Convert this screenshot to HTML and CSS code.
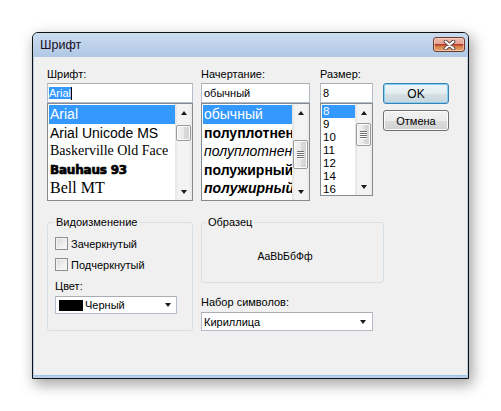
FILE: index.html
```html
<!DOCTYPE html>
<html lang="ru">
<head>
<meta charset="utf-8">
<title>Шрифт</title>
<link rel="stylesheet" href="styles.css">
</head>
<body>
<div class="stage">
  <div class="window">
    <div class="titlebar">
      <span class="title">Шрифт</span>
      <button class="close" aria-label="Закрыть">
        <svg width="13" height="10" viewBox="0 0 13 10">
          <path d="M2.5 1.5 L10.5 8.5 M10.5 1.5 L2.5 8.5" stroke="#5a4444" stroke-width="3.8" stroke-linecap="round" fill="none"/>
          <path d="M2.5 1.5 L10.5 8.5 M10.5 1.5 L2.5 8.5" stroke="#ffffff" stroke-width="2.1" stroke-linecap="round" fill="none"/>
        </svg>
      </button>
    </div>
    <div class="client">
      <div class="top-row">
        <div class="col col-font">
          <div class="lbl">Шрифт:</div>
          <div class="edit"><span class="sel">Arial</span><span class="caret"></span></div>
          <div class="list list-font">
            <div class="items">
              <div class="item hl f-arial">Arial</div>
              <div class="item f-arial">Arial Unicode MS</div>
              <div class="item f-bask">Baskerville Old Face</div>
              <div class="item f-bauhaus">Bauhaus 93</div>
              <div class="item f-bell">Bell MT</div>
            </div>
            <div class="vscroll">
              <div class="sbtn"><span class="arr-up"></span></div>
              <div class="track"><div class="thumb thumb-font"></div></div>
              <div class="sbtn"><span class="arr-down"></span></div>
            </div>
          </div>
        </div>
        <div class="col col-style">
          <div class="lbl">Начертание:</div>
          <div class="edit">обычный</div>
          <div class="list list-style">
            <div class="items">
              <div class="item hl">обычный</div>
              <div class="item s-narrow-b">полуплотненный</div>
              <div class="item s-narrow-i">полуплотненный курсив</div>
              <div class="item s-bold">полужирный</div>
              <div class="item s-bold-i">полужирный курсив</div>
            </div>
            <div class="vscroll">
              <div class="sbtn"><span class="arr-up"></span></div>
              <div class="track"><div class="thumb thumb-style"><span class="grip"></span></div></div>
              <div class="sbtn"><span class="arr-down"></span></div>
            </div>
          </div>
        </div>
        <div class="col col-size">
          <div class="lbl">Размер:</div>
          <div class="edit">8</div>
          <div class="list list-size">
            <div class="items">
              <div class="item hl">8</div>
              <div class="item">9</div>
              <div class="item">10</div>
              <div class="item">11</div>
              <div class="item">12</div>
              <div class="item">14</div>
              <div class="item">16</div>
            </div>
            <div class="vscroll">
              <div class="sbtn"><span class="arr-up"></span></div>
              <div class="track"><div class="thumb thumb-size"><span class="grip"></span></div></div>
              <div class="sbtn"><span class="arr-down"></span></div>
            </div>
          </div>
        </div>
        <div class="buttons">
          <button class="btn btn-default">OK</button>
          <button class="btn">Отмена</button>
        </div>
      </div>
      <div class="bottom-row">
        <fieldset class="group g-effects">
          <legend>Видоизменение</legend>
          <div class="check"><span class="box"></span><span>Зачеркнутый</span></div>
          <div class="check check-2"><span class="box"></span><span>Подчеркнутый</span></div>
          <div class="lbl lbl-color">Цвет:</div>
          <div class="combo combo-color"><span class="swatch"></span><span class="combo-text">Черный</span><span class="arr-down"></span></div>
        </fieldset>
        <div class="right-col">
          <fieldset class="group g-sample">
            <legend>Образец</legend>
            <div class="sample">AaBbБбФф</div>
          </fieldset>
          <div class="lbl lbl-charset">Набор символов:</div>
          <div class="combo combo-charset"><span class="combo-text">Кириллица</span><span class="arr-down"></span></div>
        </div>
      </div>
    </div>
  </div>
</div>
</body>
</html>
```

FILE: styles.css
```css
* { box-sizing: border-box; }
html, body { margin: 0; padding: 0; }
body {
  width: 501px;
  height: 411px;
  overflow: hidden;
  background: #ffffff;
  font-family: "Liberation Sans", Arial, sans-serif;
  font-size: 11px;
  color: #000;
}
.stage { padding: 32px 0 0 32px; }

.window {
  width: 437px;
  height: 347px;
  border: 1px solid #101010;
  border-radius: 6px 6px 0 0;
  background: #b7cfea;
  display: flex;
  flex-direction: column;
  box-shadow: 3px 5px 14px 1px rgba(0, 0, 0, 0.35);
}
.titlebar {
  height: 24px;
  flex: none;
  display: flex;
  align-items: center;
  justify-content: space-between;
  padding: 0 3px 0 7px;
  border-radius: 5px 5px 0 0;
  background: linear-gradient(#cbdcf0, #b0c8e5);
}
.title {
  font-family: "Liberation Sans", Arial, sans-serif;
  font-size: 12.5px;
  color: #1a0f24;
}
.close {
  width: 32px;
  height: 15px;
  margin-top: -1px;
  padding: 0;
  border: 1px solid #6e3b31;
  border-radius: 3px;
  display: flex;
  align-items: center;
  justify-content: center;
  background: linear-gradient(#efbcae 0%, #e3a392 44%, #b8382d 47%, #bf4434 56%, #d4803f 62%, #e6a674 100%);
  box-shadow: inset 0 0 0 1px rgba(255, 225, 215, 0.55);
}
.close svg { display: block; }

.client {
  flex: 1;
  margin: 0 1px 2px 1px;
  background: #f0f0f0;
  padding: 11px 0 0 13px;
  border-bottom: 1px solid #9fc6e4;
}

.top-row { display: flex; align-items: flex-start; }
.col { display: flex; flex-direction: column; }
.col-font { width: 146px; margin-right: 8px; }
.col-style { width: 109px; margin-right: 10px; }
.col-size { width: 53px; margin-right: 10px; }

.lbl { height: 13px; line-height: 13px; margin-bottom: 2px; white-space: nowrap; }

.edit {
  height: 20px;
  border: 1px solid #b4bcc7;
  border-top-color: #abadb3;
  background: #fff;
  padding: 0 2px 0 1px;
  line-height: 18px;
  white-space: nowrap;
  overflow: hidden;
  display: flex;
  align-items: center;
}
.col-style .edit, .col-size .edit { padding-left: 2px; }
.sel { background: #3399ff; color: #fff; line-height: 12px; }
.caret { width: 1px; height: 13px; background: #000; }

.list {
  height: 98px;
  border: 1px solid #868a91;
  background: #fff;
  display: flex;
}
.list-size { height: 93px; }
.items { flex: 1; min-width: 0; overflow: hidden; padding: 1px 0 0 1px; }
.item {
  height: 18.5px;
  line-height: 18.5px;
  font-size: 14px;
  white-space: nowrap;
  overflow: hidden;
  padding-left: 1px;
}
.item.hl { background: #3399ff; color: #fff; }
.list-size .item { height: 13px; line-height: 13px; font-size: 11.5px; padding-left: 1px; }

.f-arial { font-family: "Liberation Sans", Arial, sans-serif; }
.f-bask { font-family: "Liberation Serif", "Times New Roman", serif; font-size: 14px; }
.f-bauhaus { font-family: "DejaVu Sans", sans-serif; font-weight: bold; font-size: 12px; -webkit-text-stroke: 0.7px #000; letter-spacing: -0.2px; }
.f-bell { font-family: "Liberation Serif", "Times New Roman", serif; font-size: 16px; }

.s-narrow-b { font-family: "Liberation Sans Narrow", "Liberation Sans", sans-serif; font-stretch: condensed; font-weight: bold; }
.s-narrow-i { font-family: "Liberation Sans Narrow", "Liberation Sans", sans-serif; font-stretch: condensed; font-style: italic; }
.s-bold { font-weight: bold; }
.s-bold-i { font-weight: bold; font-style: italic; }

.vscroll {
  width: 17px;
  flex: none;
  display: flex;
  flex-direction: column;
  background: linear-gradient(to right, #e4e4e4, #f3f3f3 20%, #f3f3f3 80%, #e8e8e8);
}
.sbtn { height: 17px; flex: none; display: flex; align-items: center; justify-content: center; }
.track { flex: 1; }
.arr-up {
  width: 0; height: 0;
  border-left: 3.5px solid transparent;
  border-right: 3.5px solid transparent;
  border-bottom: 4px solid #1a1a1a;
}
.arr-down {
  width: 0; height: 0;
  border-left: 3.5px solid transparent;
  border-right: 3.5px solid transparent;
  border-top: 4px solid #1a1a1a;
}
.thumb {
  margin: 0 1px;
  border: 1px solid #9a9a9a;
  border-radius: 2px;
  background: linear-gradient(to right, #f4f4f4, #e9e9e9 50%, #dadada 51%, #d2d2d2);
  box-shadow: inset 0 0 0 1px #fbfbfb;
  display: flex;
  align-items: center;
  justify-content: center;
}
.thumb-font { margin-top: 4px; height: 16px; }
.thumb-style { margin-top: 19px; height: 29px; }
.thumb-size { margin-top: 2px; height: 23px; }
.grip {
  width: 7px;
  height: 8px;
  background: repeating-linear-gradient(#6f6f6f 0 1px, #fdfdfd 1px 2px);
}

.buttons { width: 66px; padding-top: 15px; display: flex; flex-direction: column; }
.btn {
  width: 66px;
  height: 21px;
  padding: 0;
  border: 1px solid #707070;
  border-radius: 3px;
  background: linear-gradient(#f2f2f2 0%, #ebebeb 50%, #dddddd 51%, #cfcfcf 100%);
  box-shadow: inset 0 0 0 1px #fcfcfc;
  font-family: "Liberation Sans", Arial, sans-serif;
  font-size: 11px;
  color: #000;
}
.btn + .btn { margin-top: 6px; }
.btn-default {
  border-color: #3c7fb1;
  background: linear-gradient(#eef4f7 0%, #e5ecf0 50%, #d5dfe6 51%, #c9d6df 100%);
  box-shadow: inset 0 0 0 1px #7fd0f2;
  font-size: 12px;
}

.bottom-row { display: flex; align-items: flex-start; margin-top: 15px; }
.group {
  margin: 0;
  border: 1px solid #d5dfe5;
  border-radius: 3px;
  min-width: 0;
}
.group legend { padding: 0 2px; margin-left: -1px; line-height: 13px; height: 13px; }
.g-effects { width: 146px; height: 115px; margin-right: 8px; padding: 0 7px 0 7px; }
.check { display: flex; align-items: center; height: 13px; margin-top: 8px; }
.check-2 { margin-top: 8px; }
.box {
  width: 13px;
  height: 13px;
  margin-right: 3px;
  border: 1px solid #8e8f8f;
  background: linear-gradient(135deg, #d9d9d9, #f6f6f6 80%);
  box-shadow: inset 0 0 0 1px #f2f2f2;
  flex: none;
}
.lbl-color { margin-top: 9px; margin-bottom: 0; }

.combo {
  background: #fff;
  border: 1px solid #b4bcc7;
  border-top-color: #abadb3;
  display: flex;
  align-items: center;
  white-space: nowrap;
}
.combo-color { width: 122px; height: 18px; margin-top: 3px; padding: 0 4px 0 3px; }
.swatch { width: 24px; height: 11px; background: #000; margin-right: 2px; flex: none; }
.combo-text { flex: 1; }
.combo .arr-down { margin-right: 1px; }

.right-col { width: 183px; display: flex; flex-direction: column; }
.g-sample { width: 183px; height: 67px; padding: 0 7px; }
.g-sample legend { margin-left: -3px; }
.sample { text-align: center; padding: 21px 15px 0 0; line-height: 13px; font-size: 10.5px; }
.lbl-charset { margin-top: 13px; margin-bottom: 3px; }
.combo-charset { width: 172px; height: 19px; padding: 0 5px 0 2px; }
```
